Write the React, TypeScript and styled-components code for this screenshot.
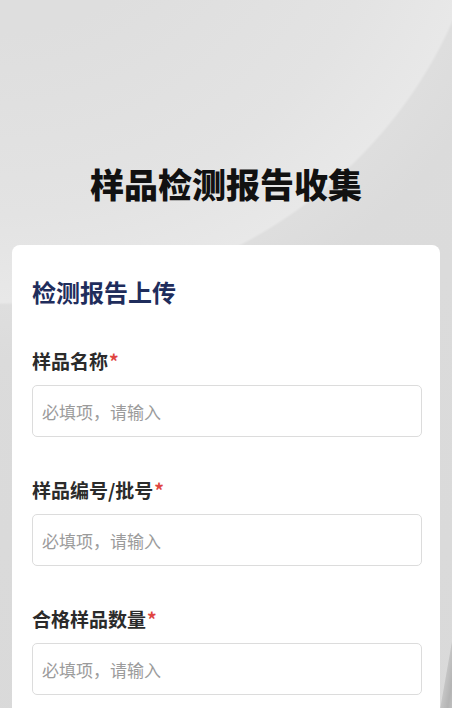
import React from 'react'
import styled, { createGlobalStyle } from 'styled-components'

const GlobalStyle = createGlobalStyle`
  html, body {
    margin: 0;
    padding: 0;
  }
  body {
    font-family: "Noto Sans CJK SC", "Noto Sans", sans-serif;
    background: #dadada;
  }
  * {
    box-sizing: border-box;
  }
`

// soft grey backdrop: a big pale arc from the top-left and a darker sliver at the right edge
const Page = styled('div')({
  minHeight: '100vh',
  padding: '163px 0 40px',
  background: [
    'linear-gradient(100deg, transparent 97.4%, #c4c4c4 97.6%, #b4b4b4 99%, #c0c0c0 100%) 0 540px / 100% 170px no-repeat',
    'radial-gradient(ellipse 490px 455px at 0 -150px, #dedede 40%, #e3e3e3 80%, #e8e8e8 99.4%, #dedede 100%, #dbdbdb 112%, rgba(218,218,218,0) 130%)',
    'linear-gradient(180deg, #dcdcdc 0%, #d9d9d9 100%)',
  ].join(', '),
})

const Title = styled('h1')({
  margin: '0 0 41px',
  textAlign: 'center',
  fontSize: '34px',
  lineHeight: '41px',
  fontWeight: 900,
  color: '#111',
})

const Card = styled('section')({
  margin: '0 12px',
  background: '#fff',
  borderRadius: '8px',
  padding: '31px 18px 40px 20px',
})

const CardTitle = styled('h2')({
  margin: '0 0 40px',
  fontSize: '24px',
  lineHeight: '32px',
  fontWeight: 700,
  color: '#1f2d5c',
})

const Field = styled('div')({
  marginBottom: '40px',
})

const Label = styled('label')({
  display: 'block',
  fontSize: '19px',
  lineHeight: '26px',
  fontWeight: 700,
  color: '#2b2b2b',
  marginBottom: '11px',
})

const Required = styled('span')({
  color: '#e0453f',
  marginLeft: '1px',
})

const Input = styled('input')({
  display: 'block',
  width: '100%',
  height: '52px',
  padding: '0 9px',
  border: '1px solid #dcdcdc',
  borderRadius: '5px',
  fontFamily: '"Noto Sans CJK SC", sans-serif',
  fontSize: '17px',
  color: '#333',
  outline: 'none',
  '&::placeholder': {
    color: '#9b9b9b',
  },
})

const fields = ['样品名称', '样品编号/批号', '合格样品数量']

export default function App(): JSX.Element {
  return (
    <>
      <GlobalStyle />
      <Page>
        <Title>样品检测报告收集</Title>
        <Card>
          <CardTitle>检测报告上传</CardTitle>
          {fields.map((name) => (
            <Field key={name}>
              <Label>
                {name}
                <Required>*</Required>
              </Label>
              <Input placeholder="必填项，请输入" />
            </Field>
          ))}
        </Card>
      </Page>
    </>
  )
}
